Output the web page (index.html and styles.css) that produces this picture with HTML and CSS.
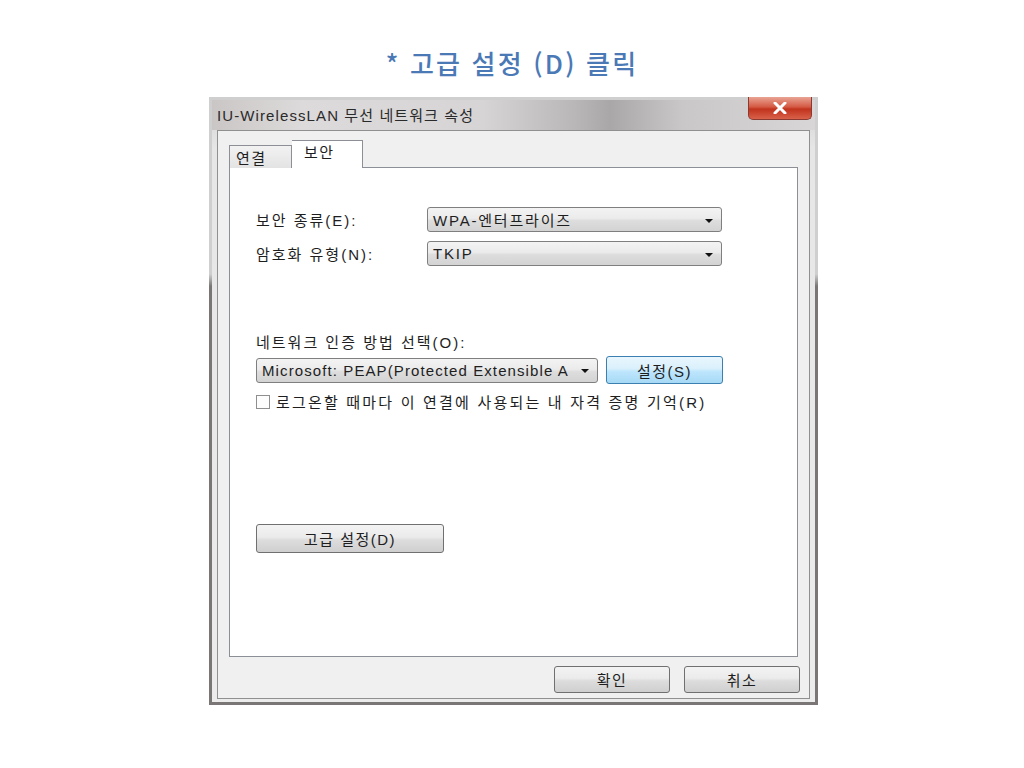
FILE: index.html
```html
<!DOCTYPE html>
<html lang="ko">
<head>
    <meta charset="UTF-8">
    <title>고급 설정 (D) 클릭</title>
    <link rel="stylesheet" href="styles.css">
</head>
<body>
    <div class="caption">
        <h1>* 고급 설정 (D) 클릭</h1>
    </div>

    <div class="window">
        <div class="titlebar">
            <span class="title">IU-WirelessLAN 무선 네트워크 속성</span>
            <div class="close">
                <svg width="14" height="12" viewBox="0 0 14 12">
                    <path d="M2 1 L12 11 M12 1 L2 11" stroke="#ffffff" stroke-width="3" stroke-linecap="round"/>
                </svg>
            </div>
        </div>

        <div class="client">
            <div class="tabs">
                <div class="tab">연결</div>
                <div class="tab selected">보안</div>
            </div>

            <div class="panel">
                <div class="field">
                    <label>보안 종류(E):</label>
                    <div class="combo wide">WPA-엔터프라이즈<span class="arrow"></span></div>
                </div>
                <div class="field">
                    <label>암호화 유형(N):</label>
                    <div class="combo wide">TKIP<span class="arrow"></span></div>
                </div>

                <div class="auth">
                    <p class="auth-label">네트워크 인증 방법 선택(O):</p>
                    <div class="auth-row">
                        <div class="combo method">Microsoft: PEAP(Protected Extensible A<span class="arrow"></span></div>
                        <button class="btn blue" type="button">설정(S)</button>
                    </div>
                    <div class="check">
                        <span class="box"></span>
                        <span>로그온할 때마다 이 연결에 사용되는 내 자격 증명 기억(R)</span>
                    </div>
                </div>

                <button class="btn advanced" type="button">고급 설정(D)</button>
            </div>

            <div class="actions">
                <button class="btn" type="button">확인</button>
                <button class="btn" type="button">취소</button>
            </div>
        </div>
    </div>
</body>
</html>
```

FILE: styles.css
```css
:root {
    --ui-font: "Liberation Sans", "Noto Sans CJK KR", sans-serif;
    --text: #1e1e1e;
    --frame-dark: #7b7676;
    --client-bg: #f0f0f0;
    --panel-border: #8c8f96;
}

body {
    margin: 0;
    background: #ffffff;
    font-family: var(--ui-font);
    color: var(--text);
}

/* --- Caption above the screenshot --- */

.caption {
    height: 97px;
    padding-top: 27px;
    box-sizing: border-box;
    display: flex;
    align-items: center;
    justify-content: center;
}

.caption h1 {
    margin: 0;
    font-family: "Noto Sans CJK KR", sans-serif;
    font-size: 26px;
    font-weight: 500;
    letter-spacing: 2.2px;
    color: #4b79b6;
}

/* --- Dialog window --- */

.window {
    width: 609px;
    height: 608px;
    margin-left: 209px;
    box-sizing: border-box;
    border: 3px solid;
    border-image: linear-gradient(to bottom, #cfcfcf 0, #cfcfcf 29%, var(--frame-dark) 31%, var(--frame-dark) 100%) 1;
    background: linear-gradient(to bottom, #d3d2d2 0, #e6e6e6 8%, #ececec 100%);
    display: flex;
    flex-direction: column;
}

.titlebar {
    height: 30px;
    flex: none;
    display: flex;
    align-items: flex-start;
    justify-content: space-between;
    background: linear-gradient(to right, #cbc6c6 0, #dcdada 15%, #d6d4d4 45%, #b9b7b7 60%, #a9a7a7 66%, #c9c7c7 78%, #d8d6d6 100%);
}

.title {
    font-size: 15px;
    letter-spacing: 1.1px;
    padding: 4px 0 0 5px;
    color: #2a2a2a;
}

.close {
    width: 64px;
    height: 23px;
    margin: -3px 3px 0 0;
    box-sizing: border-box;
    border: 1px solid #8a3a30;
    border-top: none;
    border-radius: 0 0 5px 5px;
    background: linear-gradient(to bottom, #e9a494 0, #d45a44 45%, #c1331d 55%, #d9614a 100%);
    display: flex;
    align-items: center;
    justify-content: center;
}

.client {
    flex: 1;
    margin: 0 5px 3px;
    border: 1px solid #909090;
    background: var(--client-bg);
    padding: 9px 11px 5px;
    display: flex;
    flex-direction: column;
}

/* --- Tabs --- */

.tabs {
    height: 28px;
    display: flex;
    align-items: flex-end;
    position: relative;
    z-index: 1;
    margin-bottom: -1px;
}

.tab {
    width: 63px;
    height: 23px;
    box-sizing: border-box;
    border: 1px solid var(--panel-border);
    border-bottom: none;
    background: linear-gradient(to bottom, #f2f2f2, #e3e3e3);
    font-size: 15px;
    letter-spacing: 1.5px;
    padding: 1px 0 0 6px;
}

.tab.selected {
    width: 71px;
    height: 28px;
    border-left: none;
    background: #ffffff;
    padding: 0 0 0 12px;
}

.panel {
    flex: 1;
    border: 1px solid var(--panel-border);
    background: #ffffff;
    padding: 39px 0 0 26px;
    display: flex;
    flex-direction: column;
    align-items: flex-start;
}

/* --- Form fields --- */

.field {
    display: flex;
    align-items: center;
    margin-bottom: 9px;
    font-size: 15px;
    letter-spacing: 2px;
}

.field label {
    width: 171px;
}

.combo {
    height: 25px;
    box-sizing: border-box;
    border: 1px solid #7f7f7f;
    border-radius: 3px;
    background: linear-gradient(to bottom, #f3f3f3 0, #ebebeb 45%, #dddddd 55%, #d3d3d3 100%);
    padding: 0 0 0 5px;
    display: flex;
    align-items: center;
    justify-content: space-between;
    font-size: 15px;
    letter-spacing: 1.8px;
    white-space: nowrap;
    overflow: hidden;
}

.combo.wide {
    width: 295px;
}

.combo.method {
    width: 342px;
    letter-spacing: 1.1px;
}

.arrow {
    flex: none;
    width: 0;
    height: 0;
    border-left: 4px solid transparent;
    border-right: 4px solid transparent;
    border-top: 4px solid #111111;
    margin: 2px 8px 0 4px;
}

.auth {
    margin-top: 56px;
    font-size: 15px;
    letter-spacing: 2px;
}

.auth-label {
    margin: 0 0 4px;
}

.auth-row {
    display: flex;
    align-items: center;
    gap: 8px;
}

.check {
    display: flex;
    align-items: center;
    gap: 6px;
    margin-top: 7px;
    letter-spacing: 2.2px;
}

.check .box {
    width: 14px;
    height: 14px;
    box-sizing: border-box;
    border: 1px solid #8f8f8f;
    background: #fdfdfd;
}

/* --- Buttons --- */

.btn {
    font-family: var(--ui-font);
    font-size: 15px;
    letter-spacing: 1.5px;
    color: var(--text);
    width: 116px;
    height: 27px;
    border: 1px solid #707070;
    border-radius: 3px;
    background: linear-gradient(to bottom, #f3f3f3 0, #ebebeb 45%, #dddddd 55%, #cfcfcf 100%);
    padding: 0;
}

.btn.blue {
    height: 28px;
    width: 117px;
    border-color: #3c7fb1;
    background: linear-gradient(to bottom, #eaf6fd 0, #d9f0fc 45%, #bee6fd 55%, #a7d9f5 100%);
}

.btn.advanced {
    width: 188px;
    height: 29px;
    margin-top: 112px;
}

.actions {
    display: flex;
    justify-content: flex-end;
    gap: 14px;
    padding-top: 9px;
    margin-right: -2px;
}
```
